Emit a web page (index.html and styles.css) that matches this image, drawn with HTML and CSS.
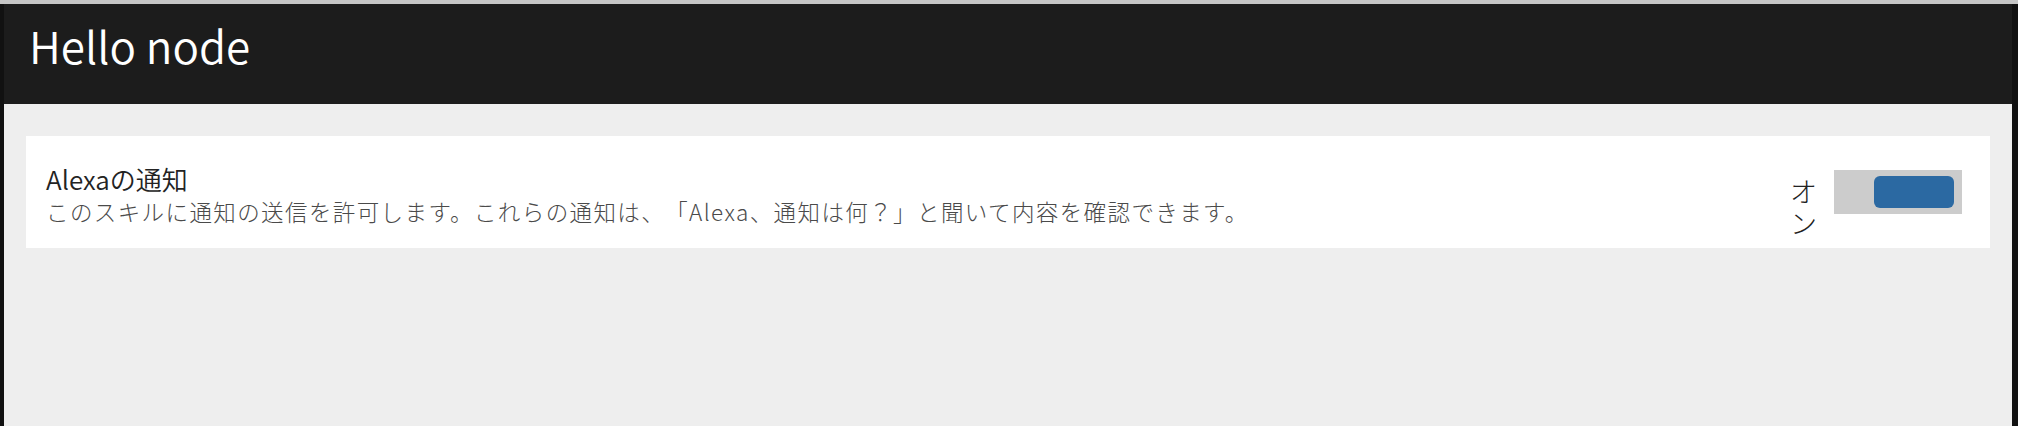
FILE: index.html
```html
<!DOCTYPE html>
<html lang="ja">
<head>
<meta charset="utf-8">
<title>Hello node</title>
<link rel="stylesheet" href="styles.css">
</head>
<body>
<div class="frame">
  <div class="app">
    <header class="header">
      <h1 class="header-title">Hello node</h1>
    </header>
    <main class="content">
      <section class="card">
        <div class="card-text">
          <div class="card-title">Alexaの通知</div>
          <div class="card-desc">このスキルに通知の送信を許可します。これらの通知は、「Alexa、通知は何？」と聞いて内容を確認できます。</div>
        </div>
        <div class="card-control">
          <span class="toggle-label">オン</span>
          <span class="toggle" role="switch" aria-checked="true"><span class="toggle-knob"></span></span>
        </div>
      </section>
    </main>
  </div>
</div>
</body>
</html>
```

FILE: styles.css
```css
html, body {
  margin: 0;
  padding: 0;
  height: 100%;
}
body {
  font-family: "Noto Sans CJK JP", "Noto Sans", sans-serif;
  background: #111111;
  overflow: hidden;
  text-spacing-trim: space-all;
}
.frame {
  box-sizing: border-box;
  height: 426px;
  border-top: 4px solid #c6c6c6;
  padding: 0 6px 0 4px;
  background: #111111;
}
.app {
  height: 100%;
  background: #eeeeee;
}
.header {
  box-sizing: border-box;
  height: 100px;
  background: #1c1c1c;
  padding: 19px 0 0 25px;
}
.header-title {
  margin: 0;
  font-weight: 350;
  font-size: 44px;
  line-height: 1;
  color: #ffffff;
}
.content {
  padding: 32px 22px 0 22px;
}
.card {
  box-sizing: border-box;
  height: 112px;
  background: #ffffff;
  display: flex;
  align-items: center;
  justify-content: space-between;
  padding: 0 28px 0 20px;
}
.card-text {
  display: flex;
  flex-direction: column;
  margin-top: 4px;
}
.card-title {
  font-size: 26px;
  font-weight: 350;
  line-height: 33px;
  color: #232323;
}
.card-desc {
  font-size: 22.5px;
  font-weight: 300;
  letter-spacing: 1.4px;
  line-height: 32px;
  color: #4a4a4a;
}
.card-control {
  display: flex;
  align-items: center;
}
.toggle-label {
  width: 27px;
  font-size: 27px;
  font-weight: 300;
  line-height: 32px;
  color: #222222;
  margin-right: 17px;
  margin-top: 30px;
}
.toggle {
  box-sizing: border-box;
  width: 128px;
  height: 44px;
  background: #cccccc;
  display: flex;
  align-items: center;
  justify-content: flex-end;
  padding-right: 8px;
}
.toggle-knob {
  width: 80px;
  height: 32px;
  border-radius: 6px;
  background: #2b69a2;
}
```
